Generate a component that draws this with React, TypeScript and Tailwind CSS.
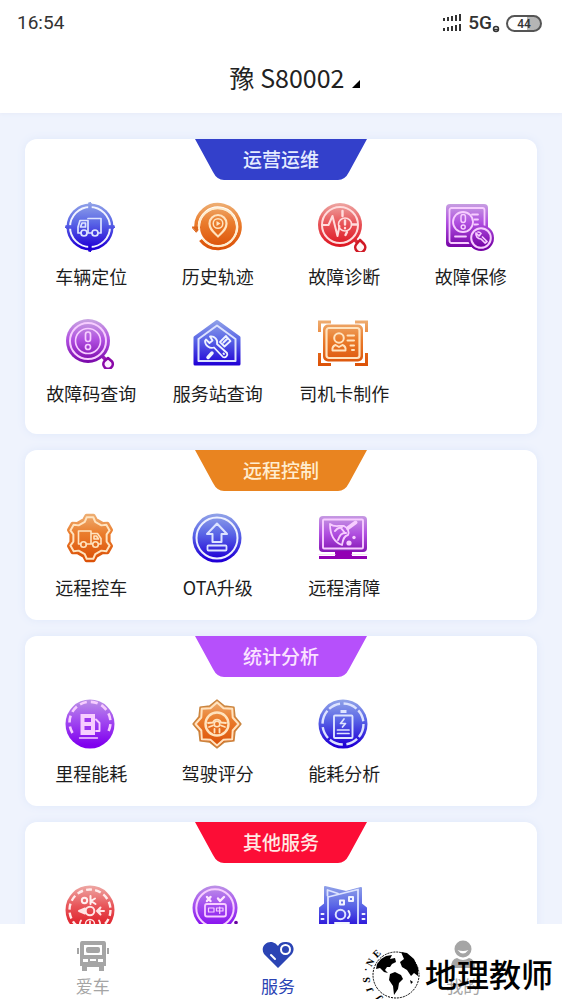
import type { ReactNode } from 'react'

const CJK = "font-['Noto_Sans_CJK_SC',sans-serif]"

const LIGHT = {
  blue: '#dde3ff',
  orange: '#ffe3bf',
  red: '#ffdcdc',
  purple: '#f7cdff',
}

interface Service {
  label?: string
  icon: ReactNode
}

interface SectionProps {
  title: string
  color: string
  titleColor: string
  items: Service[]
  className?: string
}

// Points around a centre, alternating through the given radius/angle pairs
function ringPoints(count: number, steps: [number, number][], start = -90) {
  const points: string[] = []
  for (let i = 0; i < count; i++) {
    steps.forEach(([radius, offset]) => {
      const a = ((start + (i * 360) / count + offset) * Math.PI) / 180
      points.push(`${(25 + radius * Math.cos(a)).toFixed(2)},${(25 + radius * Math.sin(a)).toFixed(2)}`)
    })
  }
  return points.join(' ')
}

function gear(inner: number, outer: number) {
  return ringPoints(6, [[inner, -18], [outer, -9], [outer, 9], [inner, 18]])
}

function Icon({ children }: { children: ReactNode }) {
  return (
    <svg viewBox="0 0 50 50" fill="none" strokeLinecap="round" strokeLinejoin="round" className="mr-0.5 h-[50px] w-[50px]">
      {children}
    </svg>
  )
}

function Gradients() {
  const stops = [
    ['g-blue', '#93a5e8', '#5a66e6', '#2000d6'],
    ['g-orange', '#eeb177', '#ea7c2c', '#dc5208'],
    ['g-red', '#eeaaa6', '#e8565a', '#dc101c'],
    ['g-purple', '#c9a6e2', '#b04fe0', '#7400a4'],
    ['g-violet', '#bd94e6', '#a34df0', '#8000ee'],
  ]
  return (
    <svg className="absolute h-0 w-0" aria-hidden="true">
      <defs>
        {stops.map(([id, top, middle, bottom]) => (
          <linearGradient key={id} id={id} gradientUnits="userSpaceOnUse" x1="0" y1="0" x2="0" y2="46">
            <stop offset="0" stopColor={top} />
            <stop offset="0.45" stopColor={middle} />
            <stop offset="1" stopColor={bottom} />
          </linearGradient>
        ))}
      </defs>
    </svg>
  )
}

const operations: Service[] = [
  {
    label: '车辆定位',
    icon: (
      <Icon>
        <circle cx="25" cy="25" r="23.5" fill="url(#g-blue)" />
        <circle cx="25" cy="25" r="20" stroke="#f2f4ff" strokeWidth="2" />
        <path d="M25 1V9M25 41V49M1 25H9M41 25H49" stroke="url(#g-blue)" strokeWidth="3.4" strokeLinecap="butt" />
        <path d="M24.5 0H25.5V8H24.5ZM24.5 42H25.5V50H24.5ZM0 24.5V25.5H8V24.5ZM42 24.5V25.5H50V24.5Z" stroke="url(#g-blue)" />
        <g stroke={LIGHT.blue} strokeWidth="1.7">
          <path d="M16 31H13V25L15 18.5H23V31M23 16.5H36V31H33M22.5 31H27" />
          <path d="M17 21H20.5V25H15.5Z" />
          <circle cx="19" cy="31" r="3" />
          <circle cx="30" cy="31" r="3" />
        </g>
      </Icon>
    ),
  },
  {
    label: '历史轨迹',
    icon: (
      <Icon>
        <circle cx="26" cy="25" r="18" fill="url(#g-orange)" />
        <path d="M4 26A22 22 0 1 1 8.5 38" stroke="url(#g-orange)" strokeWidth="3.5" strokeLinecap="butt" />
        <path d="M0 25H8.5L4.5 30Z" fill="#dc661c" stroke="#dc661c" />
        <path d="M7 27A19 19 0 1 1 11 37" stroke="#ffedcf" strokeWidth="2" />
        <path d="M26 34.5C22 30.5 17.5 27.5 17.5 21.5A8.5 8.5 0 0 1 34.5 21.5C34.5 27.5 30 30.5 26 34.5Z" stroke={LIGHT.orange} strokeWidth="2.2" />
        <circle cx="26" cy="21.5" r="4.8" stroke={LIGHT.orange} strokeWidth="1.5" />
        <path d="M24.5 19V24L28.5 21.5Z" fill={LIGHT.orange} />
      </Icon>
    ),
  },
  {
    label: '故障诊断',
    icon: (
      <Icon>
        <path d="M35 36L39 40" stroke="#d9303a" strokeWidth="3.5" />
        <path d="M42 38L46 42A5 5 0 1 1 38.5 42Z" stroke="#d01824" strokeWidth="2.6" fill="#fff4f4" />
        <circle cx="22" cy="23" r="22" fill="url(#g-red)" />
        <circle cx="22" cy="23" r="18" stroke={LIGHT.red} strokeWidth="2" />
        <path d="M5 23H10.5L14.5 14L19.5 34L21.5 24" stroke={LIGHT.red} strokeWidth="2" />
        <path d="M24.5 9V14M29 30L27.5 33" stroke={LIGHT.red} strokeWidth="2.4" />
        <circle cx="27" cy="22.5" r="6.5" stroke={LIGHT.red} strokeWidth="1.6" />
        <path d="M27 18.5V22.5M27 26V26.2M34 22.5H39" stroke={LIGHT.red} strokeWidth="2.4" />
      </Icon>
    ),
  },
  {
    label: '故障保修',
    icon: (
      <Icon>
        <rect x="1" y="2" width="42" height="43" rx="4" fill="url(#g-purple)" />
        <rect x="4.5" y="6" width="35" height="35" rx="2" stroke={LIGHT.purple} strokeWidth="1.8" />
        <circle cx="18" cy="20" r="10" stroke={LIGHT.purple} strokeWidth="1.8" />
        <rect x="16" y="12.5" width="4.4" height="8" rx="2.2" stroke={LIGHT.purple} strokeWidth="1.5" />
        <circle cx="18.2" cy="25" r="2" stroke={LIGHT.purple} strokeWidth="1.5" />
        <path d="M27 12.5H33M29.5 17.5H33M29.5 22.5H33M10 34.5H21" stroke={LIGHT.purple} strokeWidth="1.8" />
        <circle cx="36" cy="36" r="13" fill="url(#g-purple)" />
        <circle cx="36" cy="36" r="9.8" stroke={LIGHT.purple} strokeWidth="2" />
        <path d="M31 31L34 34L36 31.5A4 4 0 0 0 33 30M31 31A5 5 0 0 0 36 37L40 41L42 39.5L37.5 35" stroke={LIGHT.purple} strokeWidth="1.7" />
      </Icon>
    ),
  },
  {
    label: '故障码查询',
    icon: (
      <Icon>
        <path d="M36 36L40 40" stroke="#9a18b8" strokeWidth="3.5" />
        <path d="M43 39L47 42.5A4.7 4.7 0 1 1 39.5 42Z" stroke="#8a08a8" strokeWidth="2.6" fill="#fdf0ff" />
        <circle cx="23" cy="22" r="22" fill="url(#g-purple)" />
        <circle cx="23" cy="22" r="18" stroke={LIGHT.purple} strokeWidth="2" />
        <circle cx="23" cy="22" r="12.5" stroke={LIGHT.purple} strokeWidth="1.6" />
        <rect x="20.5" y="13" width="5" height="9.5" rx="2.4" stroke={LIGHT.purple} strokeWidth="1.7" />
        <circle cx="23" cy="28" r="2.5" stroke={LIGHT.purple} strokeWidth="1.7" />
      </Icon>
    ),
  },
  {
    label: '服务站查询',
    icon: (
      <Icon>
        <path d="M25 2.5L47 18.5V45H3V18.5Z" fill="url(#g-blue)" stroke="url(#g-blue)" strokeWidth="3" />
        <path d="M25 6.5L43.5 20V42H6.5V20Z" stroke={LIGHT.blue} strokeWidth="2" />
        <g stroke="#f0f3ff" strokeWidth="1.8">
          <path d="M14 20.5L17.5 24L20.5 21.5L18 17.5A6 6 0 0 1 25 25L35 34A3 3 0 0 1 31 38L22 28.5A7 7 0 0 1 13 22Z" />
          <path d="M28 23L34 17L38.5 22L32.5 27.5ZM31.5 23.5L35 20" />
          <path d="M20 34L16 38.5" strokeWidth="3.5" />
          <path d="M31.5 34.5L32 35" />
        </g>
      </Icon>
    ),
  },
  {
    label: '司机卡制作',
    icon: (
      <Icon>
        <path d="M1.5 13V3H13M37 3H48.5V13M48.5 34V45.5H37M13 45.5H1.5V34" stroke="url(#g-orange)" strokeWidth="3" strokeLinecap="butt" strokeLinejoin="miter" />
        <rect x="5" y="5.5" width="40" height="37" rx="5" fill="url(#g-orange)" />
        <rect x="8.5" y="9" width="33" height="30" rx="2.5" stroke={LIGHT.orange} strokeWidth="2.2" />
        <circle cx="21" cy="19" r="4.8" stroke={LIGHT.orange} strokeWidth="2" />
        <path d="M17.5 26A5 5 0 0 0 14.5 31.5H27.5A5 5 0 0 0 24.5 26L21 28Z" stroke={LIGHT.orange} strokeWidth="1.9" />
        <path d="M29.5 16.5H36M29.5 21.5H36M32.5 26.5H36M34 31H36" stroke={LIGHT.orange} strokeWidth="2" />
      </Icon>
    ),
  },
]

const remote: Service[] = [
  {
    label: '远程控车',
    icon: (
      <Icon>
        <polygon points={gear(19, 22.5)} fill="url(#g-orange)" stroke="url(#g-orange)" strokeWidth="4" />
        <polygon points={gear(17, 21)} stroke={LIGHT.orange} strokeWidth="2" />
        <g stroke={LIGHT.orange} strokeWidth="1.6">
          <path d="M16 31H13.5V18H26V31M26 20.5H32.5L36 25.5V31H34M21 31H27" />
          <path d="M29 23H31.5L33.5 26H29Z" />
          <circle cx="18.5" cy="31.5" r="2.8" />
          <circle cx="30.5" cy="31.5" r="2.8" />
        </g>
      </Icon>
    ),
  },
  {
    label: 'OTA升级',
    icon: (
      <Icon>
        <circle cx="25" cy="25" r="24.5" fill="url(#g-blue)" />
        <circle cx="25" cy="25" r="20.5" stroke="#edf0ff" strokeWidth="2" />
        <path d="M25 10.5L35 21H29.5V29H20.5V21H15Z" stroke={LIGHT.blue} strokeWidth="2" />
        <rect x="15.5" y="32.5" width="19" height="5" rx="1" stroke={LIGHT.blue} strokeWidth="1.8" />
      </Icon>
    ),
  },
  {
    label: '远程清障',
    icon: (
      <Icon>
        <rect x="1" y="3" width="48" height="36" rx="4" fill="url(#g-purple)" />
        <path d="M17 38H34V43H49V46H1V43H17Z" fill="#9200b4" />
        <path d="M1 41.5H17M34 41.5H49" stroke="#ffd8ff" strokeWidth="1" />
        <rect x="5" y="6.5" width="40" height="29" rx="1" stroke={LIGHT.purple} strokeWidth="1.9" />
        <path d="M30 15L37.5 9.5" stroke={LIGHT.purple} strokeWidth="4" />
        <path d="M12 11C17 15 21 12 26 13C30 15 31.5 19 30 22C25 23 25 28 24 32C16 29 12 21 12 11Z" stroke={LIGHT.purple} strokeWidth="1.8" />
        <path d="M24 14C20 15 19 15 17 18M28 20C23 20 22 22 20 27M23 15L27 20" stroke={LIGHT.purple} strokeWidth="2" />
        <circle cx="31" cy="30" r="2.6" fill={LIGHT.purple} />
        <circle cx="36" cy="24.5" r="1.7" fill={LIGHT.purple} />
      </Icon>
    ),
  },
]

const statistics: Service[] = [
  {
    label: '里程能耗',
    icon: (
      <Icon>
        <circle cx="25" cy="25" r="24.5" fill="url(#g-violet)" />
        <path d="M7.5 34A20.5 20.5 0 1 1 42.5 34" stroke={LIGHT.purple} strokeWidth="2.6" strokeLinecap="butt" strokeDasharray="7 4" />
        <path d="M15.5 15H30V36H15.5Z" fill={LIGHT.purple} />
        <path d="M19.5 19H26V23H19.5ZM19.5 27H26V31H19.5Z" fill="#9d36f0" />
        <path d="M31 20.5L34.5 24V32H31" stroke={LIGHT.purple} strokeWidth="1.9" />
        <path d="M14.5 39H32.5" stroke={LIGHT.purple} strokeWidth="1.3" />
      </Icon>
    ),
  },
  {
    label: '驾驶评分',
    icon: (
      <Icon>
        <polygon points={ringPoints(8, [[24, 0], [19.5, 22.5]])} fill="url(#g-orange)" stroke="#c9853f" strokeWidth="1.3" />
        <polygon points={ringPoints(8, [[21.5, 0], [17, 22.5]])} stroke={LIGHT.orange} strokeWidth="2" />
        <circle cx="25" cy="25" r="11.5" stroke={LIGHT.orange} strokeWidth="2.4" />
        <path d="M16 24L21 23.5A4.2 4.2 0 0 1 29 23.5L34 24M17 28L21 26.5M33 28L29 26.5M22.5 33.5V30M27.5 33.5V30" stroke={LIGHT.orange} strokeWidth="1.8" />
        <circle cx="25" cy="25" r="2.8" stroke={LIGHT.orange} strokeWidth="1.6" />
      </Icon>
    ),
  },
  {
    label: '能耗分析',
    icon: (
      <Icon>
        <circle cx="25" cy="25" r="24.5" fill="url(#g-blue)" />
        <circle cx="25" cy="25" r="20.5" stroke={LIGHT.blue} strokeWidth="2.4" strokeLinecap="butt" strokeDasharray="14 2.5 12 3.7" />
        <rect x="16" y="16.5" width="18.5" height="22.5" rx="1" stroke={LIGHT.blue} strokeWidth="1.9" />
        <path d="M22.5 12.5H28.5" stroke={LIGHT.blue} strokeWidth="3" strokeLinecap="butt" />
        <path d="M26 20L22.5 24.5H27.5L24.5 28M19.5 31H31M19.5 34.5H31" stroke={LIGHT.blue} strokeWidth="1.7" />
      </Icon>
    ),
  },
]

const others: Service[] = [
  {
    icon: (
      <Icon>
        <circle cx="25" cy="25" r="24.5" fill="url(#g-red)" />
        <circle cx="25" cy="25" r="20.5" stroke="#ffebeb" strokeWidth="2.4" strokeLinecap="butt" strokeDasharray="6 3.2" />
        <circle cx="19.5" cy="15.5" r="2.7" stroke="#fff0f0" strokeWidth="2" />
        <path d="M25.5 11V19M30 13.5L26 16L30.5 19" stroke="#fff0f0" strokeWidth="2" />
        <circle cx="25" cy="26" r="4.3" stroke="#ffe5e5" strokeWidth="2" />
        <path d="M14 26L20 23.5V28.5ZM32 26H39M35.5 22.5L32 26L35.5 29.5" stroke="#ffe5e5" strokeWidth="2" fill="#ffe5e5" />
        <circle cx="25" cy="39" r="4.5" stroke="#ffe5e5" strokeWidth="1.5" />
        <path d="M16 35.5C14.5 38 14.5 41 16 43M34 35.5C35.5 38 35.5 41 34 43M25 36.5V40" stroke="#ffe5e5" strokeWidth="1.8" />
      </Icon>
    ),
  },
  {
    icon: (
      <Icon>
        <circle cx="23" cy="23" r="22.5" fill="url(#g-violet)" />
        <circle cx="44" cy="37.5" r="1.8" fill="#6900a0" />
        <circle cx="23" cy="23" r="18.7" stroke={LIGHT.purple} strokeWidth="2" />
        <path d="M15 12L18.5 16M18.5 12L15 16M26 13.5L28 16L32 12" stroke="#ffe5ff" strokeWidth="2.4" />
        <rect x="13" y="19" width="21" height="12.5" rx="2" stroke={LIGHT.purple} strokeWidth="1.8" />
        <path d="M16.5 23H22V27H16.5ZM24.5 23H31V26H24.5ZM27.7 22V28.5" stroke={LIGHT.purple} strokeWidth="1.2" />
      </Icon>
    ),
  },
  {
    icon: (
      <Icon>
        <path d="M7 19L2 23V46H48V23L43 19V3L28 7L7 2Z" fill="url(#g-blue)" stroke="url(#g-blue)" strokeWidth="2" />
        <path d="M10 47V12L40 4.5V47M9.5 10.500V5L20 8.500" stroke={LIGHT.blue} strokeWidth="1.8" />
        <path d="M22 15.5H26V19.5H22ZM31 12H35V16H31Z" stroke="#f1f4ff" strokeWidth="2" />
        <circle cx="22.5" cy="29.5" r="4.8" stroke={LIGHT.blue} strokeWidth="2" />
        <path d="M30.5 26A5 5 0 0 1 30 33M3.500 29H5.5M3.500 34H5.5M44.500 29H46.5M44.500 34H46.5M17 38H31" stroke="#f1f4ff" strokeWidth="2" />
      </Icon>
    ),
  },
]

function Section({ title, color, titleColor, items, className = 'pb-[19px]' }: SectionProps) {
  return (
    <section className={`rounded-xl bg-white px-[3px] shadow-[0_0_8px_#dfe8fa] ${className}`}>
      <h2 className={`relative mx-auto flex h-[41px] w-[172px] items-center justify-center text-[19px] font-medium ${titleColor}`}>
        <svg viewBox="0 0 172 41" className={`absolute inset-0 h-full w-full ${color}`} fill="currentColor" aria-hidden="true">
          <path d="M0 0H172L154 33Q150 41 143 41H29Q22 41 18 33Z" />
        </svg>
        <span className="relative">{title}</span>
      </h2>
      <div className="mt-[22px] grid grid-cols-4 gap-y-[30px]">
        {items.map((item, index) => (
          <button key={index} type="button" className="flex flex-col items-center gap-3">
            {item.icon}
            <span className="mb-px h-6 text-lg leading-6 whitespace-nowrap text-[#1c1c1c]">{item.label}</span>
          </button>
        ))}
      </div>
    </section>
  )
}

function StatusBar() {
  return (
    <div className="flex h-[46px] items-center justify-between pr-5 pl-[17px] font-['Roboto',sans-serif] text-[19px] text-[#333]">
      <time>16:54</time>
      <div className="flex items-center gap-1.5">
        <svg viewBox="0 0 20 20" className="h-5 w-5" stroke="#333" strokeWidth="2" fill="none">
          <path d="M2 5V8M6 4V8M10 3V8M14 2V8M18 1V8M2 15V18M6 14V18M10 13V18M14 12V18M18 11V18" />
        </svg>
        <div className="flex items-end">
          <span className="font-medium">5G</span>
          <svg viewBox="0 0 8 8" className="mb-1 h-2 w-2" fill="none" stroke="#333" strokeWidth="1.5">
            <circle cx="4" cy="4" r="2.5" />
            <path d="M2 4.5H6" />
          </svg>
        </div>
        <div className="flex h-[17px] w-9 items-center justify-center rounded-full border-2 border-[#555] bg-linear-to-r from-white from-60% to-[#b5b5b5] to-60% pt-px text-xs font-medium">
          44
        </div>
      </div>
    </div>
  )
}

function TabBar() {
  const tabs = [
    {
      label: '爱车',
      color: 'text-[#a5a5a5]',
      icon: (
        <>
          <path fillRule="evenodd" d="M5 1H27Q29 1 29 4V26H27V31H22V27H10V31H5V26H3V4Q3 1 5 1ZM7 5V15H25V5ZM6 19V22H11V19ZM21 19V22H26V19ZM13 19V21H19V19Z" fill="currentColor" />
          <path d="M1 8V14M31 8V14" stroke="currentColor" strokeWidth="2" />
          <rect x="9" y="7" width="14" height="6" rx="2" fill="currentColor" />
        </>
      ),
    },
    {
      label: '服务',
      color: 'text-[#2b44b4]',
      icon: (
        <>
          <path d="M16 28L2 14C-2 7 4 1 10 2Q14 3 16 6Q18 2 23 2C30 1 34 8 30 14Z" fill="currentColor" />
          <circle cx="23.5" cy="9.5" r="4.5" stroke="#fff" strokeWidth="2" />
          <path d="M9 15L13 19" stroke="#fff" strokeWidth="2" strokeLinecap="round" />
        </>
      ),
    },
    {
      label: '我的',
      color: 'text-[#a5a5a5]',
      icon: (
        <>
          <circle cx="16" cy="9" r="8.5" fill="currentColor" />
          <path d="M10.5 10Q16 17 21.5 10Q16 12 10.5 10Z" fill="#fff" />
          <path d="M4 28Q4 19 10 18Q16 22 22 18Q28 19 28 28Z" fill="currentColor" />
        </>
      ),
    },
  ]

  return (
    <nav className="grid h-[75px] shrink-0 grid-cols-3 bg-white pr-1.5">
      {tabs.map((tab) => (
        <button key={tab.label} type="button" className={`flex flex-col items-center pt-4 ${tab.color}`}>
          <svg viewBox="0 0 32 32" className="h-8 w-8" fill="none">
            {tab.icon}
          </svg>
          <span className="text-[17px] leading-7">{tab.label}</span>
        </button>
      ))}
    </nav>
  )
}

function Watermark() {
  const letters: [string, number, number, number][] = [
    ['J', 21, 49, -125],
    ['J', 12, 42, -110],
    ['S', 9, 33, -90],
    ['·', 8, 23, -80],
    ['N', 12, 17, -60],
    ['E', 18, 9, -45],
  ]
  return (
    <div className="pointer-events-none absolute right-[9px] bottom-0 flex items-center text-black">
      <svg viewBox="0 0 64 52" className="h-[52px] w-16">
        <circle cx="35" cy="28" r="23" fill="#fff" stroke="#000" strokeWidth="1" strokeDasharray="2 1" />
        <g className="font-['Liberation_Serif',serif] text-[10px] font-bold" fill="#000">
          {letters.map(([letter, x, y, angle], index) => (
            <text key={index} textAnchor="middle" transform={`translate(${x} ${y}) rotate(${angle})`}>
              {letter}
            </text>
          ))}
        </g>
        <path d="M16 17L20 12L25 9L31 8L29 12L34 11L35 15L31 17L29 20L26 20L24 23L27 26L23 25L19 21L15 22ZM40 5L46 6L53 12L57 21L57 29L53 26L50 29L46 23L41 20L39 15L43 12ZM29 27L34 25L40 28L42 32L38 36L37 42L33 48L32 39L28 33ZM49 33L52 35L50 37Z" />
      </svg>
      <span className="text-[32px] leading-[44px] font-medium">地理教师</span>
    </div>
  )
}

export default function App() {
  return (
    <div className={`relative flex h-screen flex-col overflow-hidden bg-[#eff3fd] ${CJK}`}>
      <Gradients />
      <header className="h-[113px] shrink-0 bg-white shadow-[0_1px_4px_#e6ebf8]">
        <StatusBar />
        <h1 className="flex h-16 items-center justify-center pl-7 text-[25px] text-[#222]">
          <button type="button" className="flex items-baseline gap-2">
            豫 S80002
            <svg viewBox="0 0 8 8" className="h-2 w-2" aria-hidden="true">
              <path d="M8 0V8H0Z" />
            </svg>
          </button>
        </h1>
      </header>

      <main className="flex min-h-0 flex-1 flex-col gap-4 overflow-y-auto px-[25px] pt-[26px] [scrollbar-width:none] *:shrink-0">
        <Section title="运营运维" color="text-[#3340cb]" titleColor="text-[#e4ebff]" items={operations} className="pb-7" />
        <Section title="远程控制" color="text-[#e98420]" titleColor="text-[#ffedcf]" items={remote} className="pb-5" />
        <Section title="统计分析" color="text-[#b650fb]" titleColor="text-[#fbe3ff]" items={statistics} className="pb-5" />
        <Section title="其他服务" color="text-[#fc0d36]" titleColor="text-[#ffe9e4]" items={others} className="pb-5" />
      </main>

      <TabBar />
      <Watermark />
    </div>
  )
}
